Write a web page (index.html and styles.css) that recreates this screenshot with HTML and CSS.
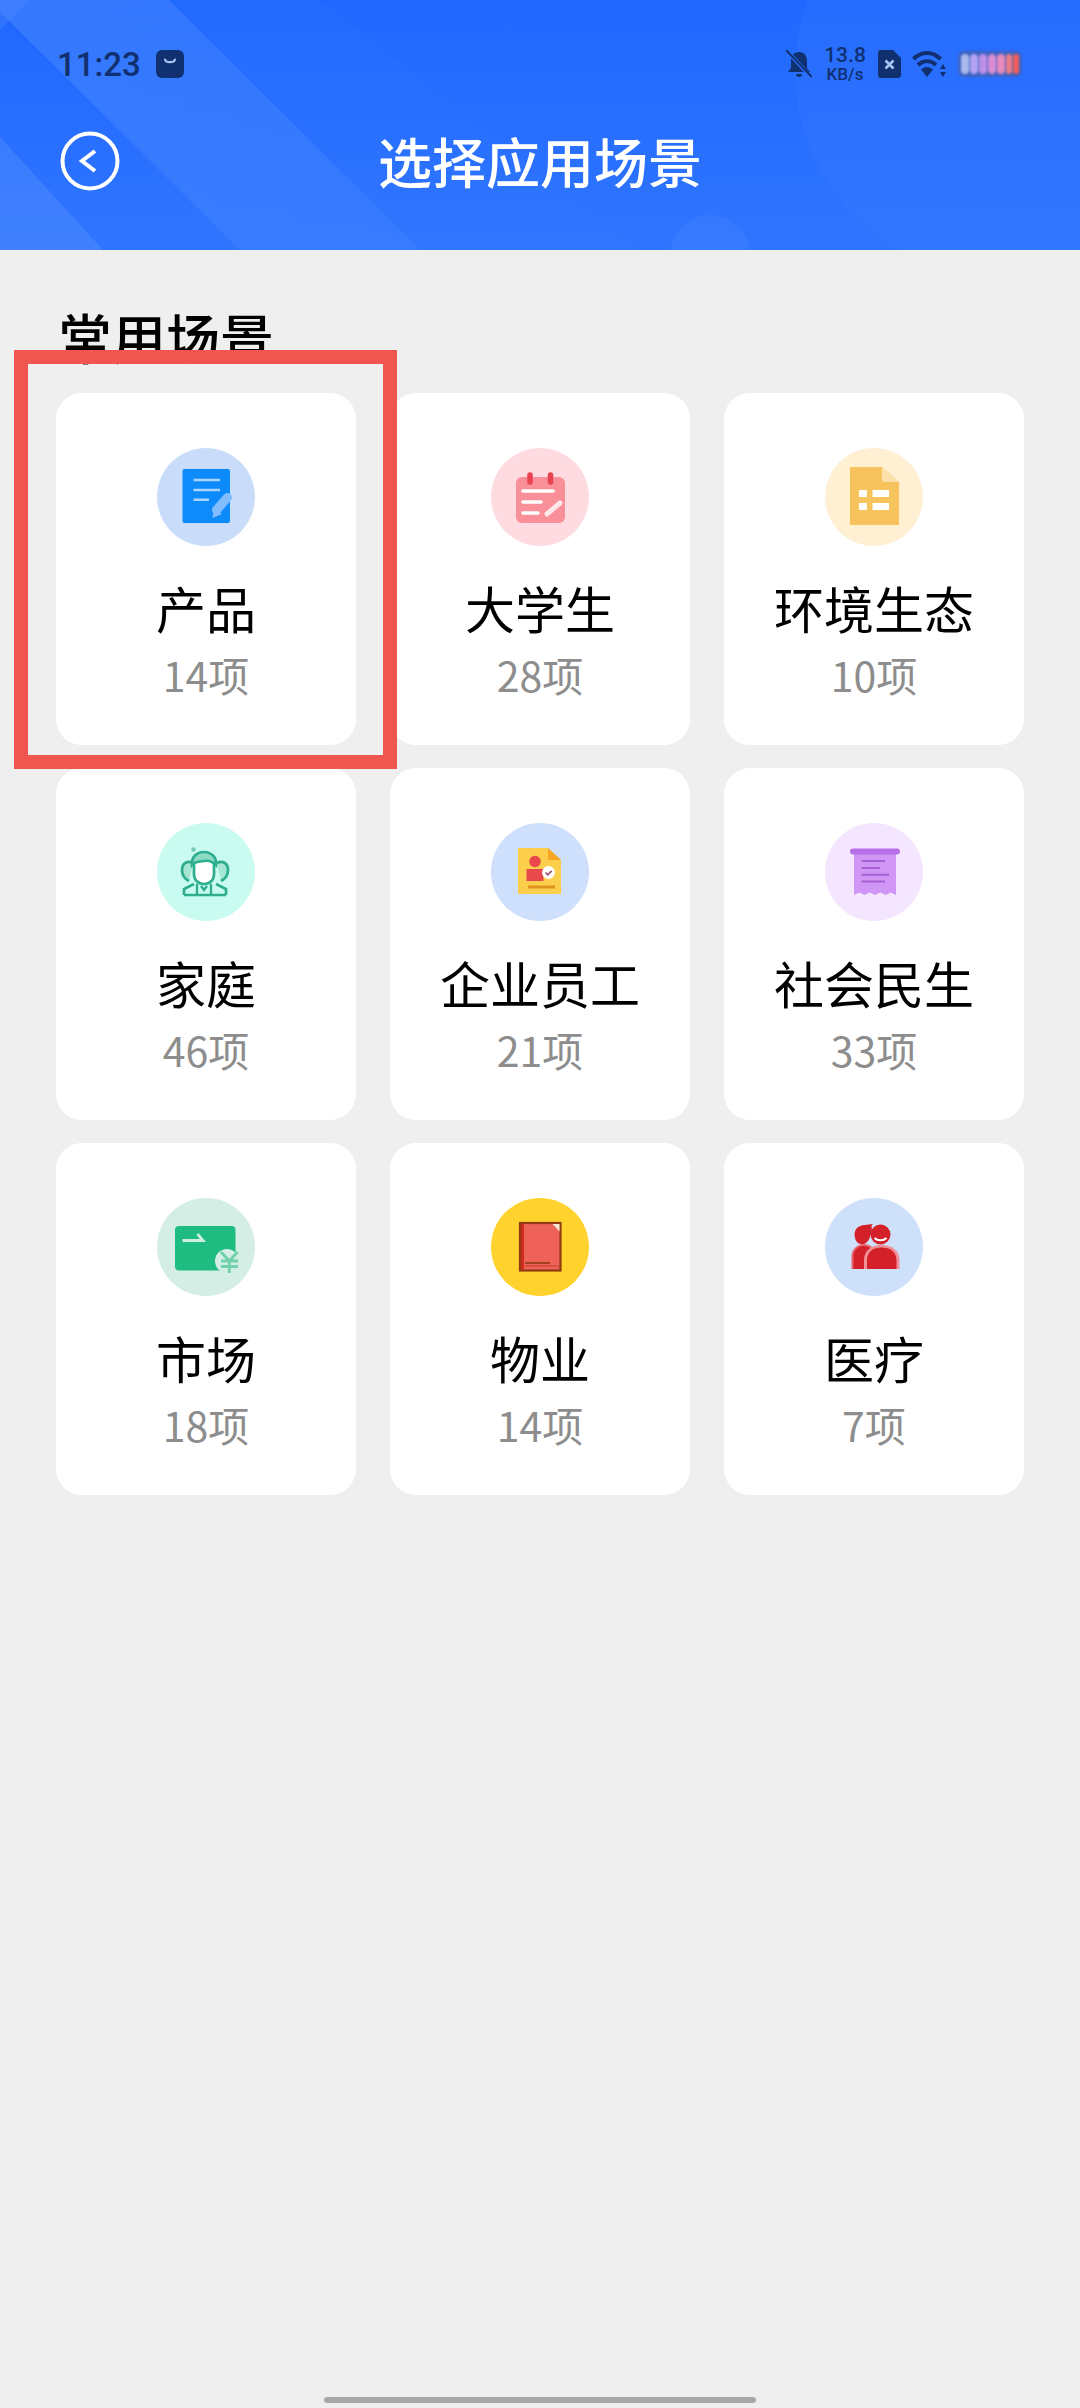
FILE: index.html
```html
<!DOCTYPE html>
<html lang="zh-CN">
<head>
  <meta charset="UTF-8" />
  <meta name="viewport" content="width=device-width, initial-scale=1" />
  <title>选择应用场景</title>
  <link rel="stylesheet" href="styles.css">
</head>
<body>
<div class="page">
  <header class="top">
    <!-- fondo del header -->
    <svg class="top-bg" viewBox="0 0 1080 250" aria-hidden="true">
      <defs>
        <linearGradient id="bandA" x1="0" y1="0" x2="1" y2="1">
          <stop offset="0" stop-color="#4b89ff" stop-opacity=".5"/>
          <stop offset="1" stop-color="#4b89ff" stop-opacity=".3"/>
        </linearGradient>
      </defs>
      <polygon points="30,0 169,0 420,250 240,250 0,12 0,0" fill="url(#bandA)"/>
      <polygon points="169,0 320,0 640,250 420,250" fill="#3f80ff" fill-opacity=".1"/>
      <polygon points="0,137 103,250 0,250" fill="#5b93ff" fill-opacity=".38"/>
      <polygon points="0,0 30,0 0,30" fill="#5b93ff" fill-opacity=".25"/>
      <circle cx="1000" cy="70" r="205" fill="#4b89ff" fill-opacity=".14"/>
      <circle cx="710" cy="255" r="40" fill="#6a9dff" fill-opacity=".14"/>
    </svg>

    <div class="status">
      <div class="status-left">
        <span class="time">11:23</span>
        <svg class="bag" viewBox="0 0 28 28" aria-hidden="true">
          <rect width="28" height="28" rx="6" fill="#10306f"/>
          <path d="M9 9.500c1 3.600 9 3.600 10 0" fill="none" stroke="#a9c3f5" stroke-width="2.200" stroke-linecap="round"/>
        </svg>
      </div>
      <div class="status-right">
        <svg class="st-bell" viewBox="0 0 26 28" aria-hidden="true">
          <path d="M13 2c5 0 8 3.800 8 9v7l3 4H2l3-4v-7c0-5.200 3-9 8-9z" fill="#10306f"/>
          <path d="M10 24h6a3 3 0 0 1-6 0z" fill="#10306f"/>
          <path d="M1 1l24 26" stroke="#2a6eff" stroke-width="4"/>
          <path d="M0 0l26 27" stroke="#10306f" stroke-width="2"/>
        </svg>
        <div class="speed">
          <span class="speed-num">13.8</span>
          <span class="speed-unit">KB/s</span>
        </div>
        <svg class="st-sim" viewBox="0 0 23 28" aria-hidden="true">
          <path d="M3 0h12l8 8v17a3 3 0 0 1-3 3H3a3 3 0 0 1-3-3V3a3 3 0 0 1 3-3z" fill="#10306f"/>
          <path d="M7.500 10.500l8 8M15.500 10.500l-8 8" stroke="#a9c3f5" stroke-width="2.600"/>
        </svg>
        <svg class="st-wifi" viewBox="0 0 34 28" aria-hidden="true">
          <path d="M1.500 9c8-8 19-8 27 0" fill="none" stroke="#10306f" stroke-width="4.200"/>
          <path d="M6 15c5.500-5 12.500-5 18 0" fill="none" stroke="#10306f" stroke-width="4.200"/>
          <path d="M9 19.500c3.400-3.400 8.600-3.400 12 0L15 27z" fill="#10306f"/>
          <path d="M31 14l3 5h-6zM31 27l-3-5h6z" fill="#10306f"/>
        </svg>
        <svg class="st-batt" viewBox="0 0 64 26" aria-hidden="true">
          <rect width="64" height="26" rx="6" fill="#3f63c0"/>
          <rect x="3" y="3" width="8" height="20" rx="4" fill="#acb9ee"/>
          <rect x="12" y="3" width="8" height="20" rx="4" fill="#b3a3f4"/>
          <rect x="21" y="3" width="8" height="20" rx="4" fill="#bf90e8"/>
          <rect x="30" y="3" width="8" height="20" rx="4" fill="#d88cd6"/>
          <rect x="39" y="3" width="8" height="20" rx="4" fill="#e78bbc"/>
          <rect x="48" y="3" width="6" height="20" rx="3" fill="#ec7d86"/>
          <rect x="55" y="3" width="6" height="20" rx="3" fill="#ef5e58"/>
        </svg>
      </div>
    </div>

    <div class="nav">
      <svg class="back" viewBox="0 0 60 60" aria-hidden="true">
        <circle cx="30" cy="30" r="27.500" fill="none" stroke="#fff" stroke-width="4"/>
        <path d="M35 20L22 30l13 10" fill="none" stroke="#fff" stroke-width="4"/>
      </svg>
      <h1 class="nav-title">选择应用场景</h1>
    </div>
  </header>

  <h2 class="section-title">常用场景</h2>

  <main class="grid">
    <div class="card">
      <svg class="ico" viewBox="0 0 98 98" aria-hidden="true">
        <circle cx="49" cy="49" r="49" fill="#c9ddfb"/>
        <rect x="25.500" y="21" width="47.500" height="54" rx="2" fill="#0e8bfb"/>
        <path d="M36.500 32H63M36.500 42H63M36.500 51.700H52" stroke="#a8d4ff" stroke-width="2.600"/>
        <path d="M59.500 62l11-12.500" stroke="#82beff" stroke-width="9" stroke-linecap="round"/>
        <path d="M55.500 70l1.500-10 8 6z" fill="#82beff"/>
      </svg>
      <div class="card-name">产品</div>
      <div class="card-count">14项</div>
    </div>

    <div class="card">
      <svg class="ico" viewBox="0 0 98 98" aria-hidden="true">
        <circle cx="49" cy="49" r="49" fill="#fddbe0"/>
        <rect x="25" y="29" width="49" height="46" rx="6" fill="#f98f98"/>
        <path d="M39 27v7M59.500 27v7" stroke="#e8434f" stroke-width="5.500" stroke-linecap="round"/>
        <path d="M32 43h30M32 54h18M32 65h15" stroke="#fff" stroke-width="3.600" stroke-linecap="round"/>
        <path d="M56 66l13-11" stroke="#fde8ea" stroke-width="5" stroke-linecap="round"/>
      </svg>
      <div class="card-name">大学生</div>
      <div class="card-count">28项</div>
    </div>

    <div class="card">
      <svg class="ico" viewBox="0 0 98 98" aria-hidden="true">
        <circle cx="49" cy="49" r="49" fill="#fff0d4"/>
        <path d="M25 19h32l17 15v43H25z" fill="#f6c35c"/>
        <path d="M57 19l17 15H60a3 3 0 0 1-3-3z" fill="#fbe0ab"/>
        <path d="M34 42h8v7h-8zM47.500 42H64v7H47.500zM34 55h8v7h-8zM47.500 55H64v7H47.500z" fill="#fff"/>
      </svg>
      <div class="card-name">环境生态</div>
      <div class="card-count">10项</div>
    </div>

    <div class="card">
      <svg class="ico" viewBox="0 0 98 98" aria-hidden="true">
        <circle cx="49" cy="49" r="49" fill="#c9fbf0"/>
        <circle cx="36.500" cy="26.500" r="2.200" fill="#74cdb7"/>
        <path d="M36 40c-5-3-11 0-11 7 0 5 3 9 7 11M60 40c5-3 11 0 11 7 0 5-3 9-7 11" fill="#a6e6d2" stroke="#2fae8f" stroke-width="2.700"/>
        <path d="M27 72v-6l10-5M69 72v-6l-10-5" fill="none" stroke="#2fae8f" stroke-width="2.700"/>
        <path d="M27 72h42" stroke="#2fae8f" stroke-width="2.700"/>
        <path d="M37 37v14c0 6 4 10 10 10s10-4 10-10V37z" fill="#fff" stroke="#2fae8f" stroke-width="2.700"/>
        <path d="M35 42c-1-8 5-13 12-13s13 5 12 13c-4-4-7-5-12-4s-9 0-12 4z" fill="#8cdcc4" stroke="#2fae8f" stroke-width="2.700"/>
        <path d="M40 61v11M54 61v11M44 63l3 4 3-4" fill="none" stroke="#2fae8f" stroke-width="2.400"/>
      </svg>
      <div class="card-name">家庭</div>
      <div class="card-count">46项</div>
    </div>

    <div class="card">
      <svg class="ico" viewBox="0 0 98 98" aria-hidden="true">
        <circle cx="49" cy="49" r="49" fill="#cfe0fc"/>
        <path d="M27 25h30l13 12v34H27z" fill="#fbcf4c"/>
        <path d="M57 25l13 12H57z" fill="#f5a623"/>
        <circle cx="44" cy="38.500" r="5.800" fill="#e8484b"/>
        <rect x="35.500" y="46" width="17" height="12" fill="#e8484b"/>
        <circle cx="57.500" cy="49.500" r="6.400" fill="#fff"/>
        <path d="M54.500 49.500l2.200 2.300 4-4" fill="none" stroke="#a0527a" stroke-width="1.800"/>
        <path d="M37 64h27" stroke="#dd931c" stroke-width="3"/>
      </svg>
      <div class="card-name">企业员工</div>
      <div class="card-count">21项</div>
    </div>

    <div class="card">
      <svg class="ico" viewBox="0 0 98 98" aria-hidden="true">
        <circle cx="49" cy="49" r="49" fill="#f5e6ff"/>
        <path d="M29 31h42v41l-5.250-2.500-5.250 2.500-5.250-2.500-5.250 2.500-5.250-2.500-5.250 2.500-5.250-2.500L29 72z" fill="#cf96f5"/>
        <rect x="25" y="25.500" width="50" height="6" rx="3" fill="#b76fe6"/>
        <path d="M36.500 38H60M36.500 45H55M36.500 51.700H64M36.500 58.400H60" stroke="#a760d8" stroke-width="2"/>
      </svg>
      <div class="card-name">社会民生</div>
      <div class="card-count">33项</div>
    </div>

    <div class="card">
      <svg class="ico" viewBox="0 0 98 98" aria-hidden="true">
        <circle cx="49" cy="49" r="49" fill="#d5eee5"/>
        <rect x="18" y="28" width="60.500" height="44.500" rx="4" fill="#1fbc81"/>
        <path d="M25.500 42.500H46l-5.500-6.500" fill="none" stroke="#cdeee0" stroke-width="2.800"/>
        <circle cx="70" cy="63" r="12" fill="#d5eee5"/>
        <path d="M64 54l8.300 9 8.300-9M64 63h17M64 68.500h17M72.300 63v12" fill="none" stroke="#6fd2ab" stroke-width="2.800"/>
      </svg>
      <div class="card-name">市场</div>
      <div class="card-count">18项</div>
    </div>

    <div class="card">
      <svg class="ico" viewBox="0 0 98 98" aria-hidden="true">
        <circle cx="49" cy="49" r="49" fill="#ffd22e"/>
        <rect x="29" y="25" width="40.500" height="47.500" fill="#ee6259" stroke="#8f3a10" stroke-width="2.200"/>
        <rect x="30" y="26" width="3" height="45.500" fill="#cf2a1b"/>
        <path d="M61.500 26h7v7.500z" fill="#f7e8d5"/>
        <path d="M34 65h25" stroke="#8f3a10" stroke-width="1.600"/>
        <path d="M34 68h34" stroke="#c0392b" stroke-width="1.200"/>
      </svg>
      <div class="card-name">物业</div>
      <div class="card-count">14项</div>
    </div>

    <div class="card">
      <svg class="ico" viewBox="0 0 98 98" aria-hidden="true">
        <circle cx="49" cy="49" r="49" fill="#cfe0fb"/>
        <path d="M30 40c-2-8 3-13 10-13l8-1c-2 2-2 3-1 4 0 0-1 14-8 16-5 1-8-2-9-6z" fill="#d32029"/>
        <path d="M26.500 71V58c0-7 6-12 12-12s11 3 11 8v17z" fill="#e8646c"/>
        <path d="M28.500 71V58c0-6 5-10 10-10 5 0 10 3 10 8v15z" fill="#d32029"/>
        <path d="M39 71V62c0-9 7-15 17.500-15S74.500 53 74.500 62v9z" fill="#f29098"/>
        <path d="M42 71V62c0-8 6-12.500 14.500-12.500S71.500 54 71.500 62v9z" fill="#d32029"/>
        <circle cx="55.500" cy="36.500" r="10" fill="#d32029"/>
        <path d="M49.500 40c3 3 9 3 12 0" fill="none" stroke="#fff" stroke-width="2"/>
      </svg>
      <div class="card-name">医疗</div>
      <div class="card-count">7项</div>
    </div>
  </main>

  <div class="mark"></div>
  <div class="home-bar"></div>
</div>
</body>
</html>
```

FILE: styles.css
```css
* {
  box-sizing: border-box;
}
body {
  margin: 0;
  background: #efefef;
  font-family: "Noto Sans CJK SC", "Noto Sans", sans-serif;
}
.page {
  position: relative;
  height: 2408px;
  overflow: hidden;
  display: flex;
  flex-direction: column;
}

/* Header */
.top {
  position: relative;
  height: 250px;
  overflow: hidden;
  background: linear-gradient(180deg, #1f68ff, #2f75ff);
}
.top-bg {
  position: absolute;
  left: 0;
  top: 0;
  width: 1080px;
  height: 250px;
}
.status {
  position: relative;
  height: 48px;
  margin-top: 40px;
  padding: 0 58px 0 57px;
  display: flex;
  justify-content: space-between;
  align-items: center;
  color: #10306f;
}
.status-left {
  display: flex;
  align-items: center;
  gap: 15px;
}
.time {
  font-family: Roboto, sans-serif;
  font-size: 33px;
  font-weight: 500;
}
.bag {
  width: 28px;
  height: 28px;
}
.status-right {
  display: flex;
  align-items: center;
}
.st-bell {
  width: 26px;
  height: 28px;
}
.speed {
  width: 42px;
  margin: 0 12px;
  display: flex;
  flex-direction: column;
  align-items: center;
  font-family: Roboto, sans-serif;
  font-weight: 500;
  white-space: nowrap;
}
.speed-num {
  font-size: 21px;
  line-height: 21px;
}
.speed-unit {
  font-size: 17px;
  line-height: 17px;
}
.st-sim {
  width: 23px;
  height: 28px;
}
.st-wifi {
  width: 34px;
  height: 28px;
  margin-left: 11px;
}
.st-batt {
  width: 64px;
  height: 26px;
  margin-left: 12px;
  filter: blur(1px);
}
.nav {
  position: relative;
  height: 60px;
  margin-top: 43px;
  padding-left: 60px;
  display: flex;
  align-items: center;
}
.back {
  width: 60px;
  height: 60px;
}
.nav-title {
  margin: 0;
  width: 840px;
  text-align: center;
  color: #fff;
  font-size: 54px;
  font-weight: 500;
  line-height: 60px;
}

/* Contenido */
.section-title {
  margin: 57px 0 26px;
  padding-left: 58px;
  font-size: 54px;
  font-weight: 500;
  line-height: 60px;
  color: #000;
}
.grid {
  padding-left: 56px;
  display: grid;
  grid-template-columns: repeat(3, 300px);
  grid-auto-rows: 352px;
  column-gap: 34px;
  row-gap: 23px;
}
.card {
  background: #fff;
  border-radius: 26px;
  padding-top: 55px;
  display: flex;
  flex-direction: column;
  align-items: center;
}
.ico {
  width: 98px;
  height: 98px;
}
.card-name {
  margin-top: 31px;
  font-size: 50px;
  line-height: 60px;
  color: #000;
}
.card-count {
  margin-top: 14px;
  font-size: 41px;
  line-height: 46px;
  color: #8d8d8d;
}

/* Marca roja sobre la primera tarjeta */
.mark {
  position: absolute;
  left: 14px;
  top: 350px;
  width: 383px;
  height: 419px;
  border: 14px solid #f0554f;
}
.home-bar {
  width: 432px;
  height: 6px;
  margin: auto auto 5px;
  border-radius: 3px;
  background: #a8a8a8;
}
```
